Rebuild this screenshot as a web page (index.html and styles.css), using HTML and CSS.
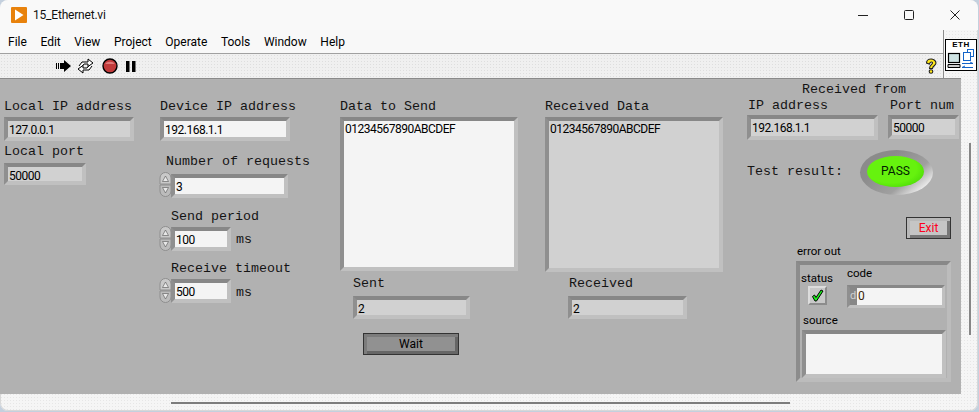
FILE: index.html
```
<!DOCTYPE html>
<html lang="en">
<head>
<meta charset="utf-8">
<title>15_Ethernet.vi</title>
<link rel="stylesheet" href="styles.css">
</head>
<body>
<div class="window">
  <header class="titlebar">
    <svg class="app-icon" width="16" height="16" viewBox="0 0 16 16"><rect width="16" height="16" rx="1" fill="#e8820c"/><path d="M4 2.500 L12.500 8 L4 13.500 Z" fill="#fff"/></svg>
    <span class="title">15_Ethernet.vi</span>
    <div class="window-controls">
      <svg width="12" height="12" viewBox="0 0 12 12"><path d="M1 6.500H11" stroke="#222" fill="none"/></svg>
      <svg width="12" height="12" viewBox="0 0 12 12"><rect x="1.500" y="1.500" width="9" height="9" rx="1" stroke="#222" fill="none"/></svg>
      <svg width="12" height="12" viewBox="0 0 12 12"><path d="M1.500 1.500L10.500 10.500M10.500 1.500L1.500 10.500" stroke="#222" fill="none"/></svg>
    </div>
  </header>
  <div class="top-area">
    <div class="bars">
      <nav class="menubar">
        <span>File</span><span>Edit</span><span>View</span><span>Project</span><span>Operate</span><span>Tools</span><span>Window</span><span>Help</span>
      </nav>
      <div class="toolbar">
        <svg class="tool-run" width="17" height="14" viewBox="0 0 17 14"><path d="M1 4h1v6H1zM3 4h1v6H3zM5 4h4V1l7 6-7 6v-3H5z" fill="#000"/></svg>
        <svg class="tool-loop" width="17" height="16" viewBox="0 0 17 16"><path d="M2 8L5 4H11V1L16 5L11 8.500V6H7L5.500 8M15 8L12 12H6V15L1 11L6 7.500V10H10L11.500 8" fill="#fff" stroke="#000" stroke-width="1"/></svg>
        <svg class="tool-stop" width="16" height="16" viewBox="0 0 16 16"><circle cx="8" cy="8" r="7" fill="#c13a3a" stroke="#000" stroke-width="1.400"/><path d="M3 6a5.500 4 0 0 1 10 0z" fill="#e07a7a"/></svg>
        <svg class="tool-pause" width="10" height="11" viewBox="0 0 10 11"><path d="M0 0h3.500v11H0zM6 0h3.500v11H6z" fill="#000"/></svg>
        <svg class="tool-help" width="12" height="16" viewBox="0 0 12 16"><path d="M1.500 5C1.500 2 4 1 6 1S11 2.500 11 5 7.500 8 7.500 10.500H4.500C4 7.500 7.500 6.500 7.500 5S5 3.500 4.500 6z" fill="#ffe81a" stroke="#222" stroke-width="1.100"/><circle cx="6" cy="13.500" r="1.800" fill="#ffe81a" stroke="#222" stroke-width="1.100"/></svg>
      </div>
    </div>
    <div class="vi-icon">
      <span class="vi-icon-label">ETH</span>
      <svg width="28" height="20" viewBox="0 0 28 20">
        <rect x="1.500" y="4.500" width="11" height="9" fill="#cfe4e4" stroke="#000" stroke-width="1.200"/>
        <path d="M1 15.500H13V18.500H1z" fill="#ccc" stroke="#000"/>
        <rect x="20.500" y=".5" width="6" height="7" fill="none" stroke="#1464c8"/>
        <rect x="16.500" y="3.500" width="7" height="8" fill="#fff" stroke="#1464c8"/>
        <path d="M15 14.500H26M23 13l3 1.500M15 18.500H26M18 17l-3 1.500" stroke="#1464c8" fill="none"/>
      </svg>
    </div>
  </div>

  <main class="panel">
    <span class="label mono l-local-ip">Local IP address</span>
    <div class="field ind f-local-ip">127.0.0.1</div>
    <span class="label mono l-local-port">Local port</span>
    <div class="field ind f-local-port">50000</div>

    <span class="label mono l-device-ip">Device IP address</span>
    <div class="field ctl f-device-ip">192.168.1.1</div>

    <span class="label mono l-requests">Number of requests</span>
    <svg class="spin s-requests" width="13" height="25" viewBox="0 0 13 25"><use href="#spinner"/></svg>
    <div class="field ctl f-requests">3</div>

    <span class="label mono l-period">Send period</span>
    <svg class="spin s-period" width="13" height="25" viewBox="0 0 13 25"><use href="#spinner"/></svg>
    <div class="field ctl f-period">100</div>
    <span class="label mono l-ms1">ms</span>

    <span class="label mono l-timeout">Receive timeout</span>
    <svg class="spin s-timeout" width="13" height="25" viewBox="0 0 13 25"><use href="#spinner"/></svg>
    <div class="field ctl f-timeout">500</div>
    <span class="label mono l-ms2">ms</span>

    <span class="label mono l-data">Data to Send</span>
    <div class="field ctl box f-data">01234567890ABCDEF</div>
    <span class="label mono l-sent">Sent</span>
    <div class="field ind f-sent">2</div>
    <div class="wait-btn">Wait</div>

    <span class="label mono l-rdata">Received Data</span>
    <div class="field ind box f-rdata">01234567890ABCDEF</div>
    <span class="label mono l-received">Received</span>
    <div class="field ind f-received">2</div>

    <span class="label mono l-from">Received from</span>
    <span class="label mono l-ip">IP address</span>
    <div class="field ind f-ip">192.168.1.1</div>
    <span class="label mono l-port">Port num</span>
    <div class="field ind f-port">50000</div>

    <span class="label mono l-test">Test result:</span>
    <div class="led-ring"><div class="led">PASS</div></div>

    <div class="exit-btn">Exit</div>

    <span class="label sans l-error">error out</span>
    <div class="cluster">
      <span class="label sans l-status">status</span>
      <div class="status-btn">
        <svg width="13" height="13" viewBox="0 0 13 13"><path d="M1.500 7.500L3.500 6L5 8.500L10 1L12 2L5.500 12H4z" fill="#1cf01c" stroke="#000"/></svg>
      </div>
      <span class="label sans l-code">code</span>
      <div class="field code-field"><span class="radix">d</span><span class="code-value">0</span></div>
      <span class="label sans l-source">source</span>
      <div class="field ctl box f-source"></div>
    </div>
  </main>

  <div class="vscroll"></div>
  <div class="hscroll"></div>
</div>
<svg class="defs" width="0" height="0">
  <symbol id="spinner" viewBox="0 0 13 25">
    <path d="M1 12V6a5.500 5.500 0 0 1 11 0v6z" fill="#c9c9c9" stroke="#8e8e8e"/>
    <path d="M1 13v6a5.500 5.500 0 0 0 11 0v-6z" fill="#bcbcbc" stroke="#8e8e8e"/>
    <path d="M6.500 4L9.500 9.500H3.500z" fill="#e8e8e8" stroke="#666" stroke-width=".7"/>
    <path d="M6.500 21L9.500 15.500H3.500z" fill="#e8e8e8" stroke="#666" stroke-width=".7"/>
  </symbol>
</svg>
</body>
</html>
```

FILE: styles.css
```
* { box-sizing: border-box; }
html, body { margin: 0; height: 100%; background: #c4d0de; overflow: hidden; }
body { width: 979px; height: 412px; font-family: Roboto, "Open Sans", sans-serif; }
.defs { position: absolute; }

.window {
  position: relative;
  width: 978px;
  height: 411px;
  background-color: #f5f5f5;
  background-image: radial-gradient(#e6e6e6 .7px, transparent .8px);
  background-size: 3px 3px;
  border-radius: 8px;
  overflow: hidden;
  box-shadow: inset 0 0 0 1px #d8d8d8;
}

.titlebar {
  height: 30px;
  display: flex;
  align-items: center;
  padding-left: 11px;
  background: #f9f9f9;
  color: #111;
}
.app-icon { margin-right: 6px; }
.title { font-size: 12px; line-height: 16px; letter-spacing: -.2px; }
.window-controls { margin-left: auto; display: flex; gap: 34px; margin-right: 17px; }

.top-area { display: flex; height: 48px; }
.bars { flex: 1; border-right: 1px solid #8c8c8c; }
.menubar {
  height: 24px;
  display: flex;
  gap: 13.600px;
  padding: 1px 0 0 8px;
  align-items: center;
  font-size: 12px;
  color: #000;
  background: #f8f8f8;
  border-bottom: 1px solid #a0a0a0;
}
.toolbar {
  position: relative;
  height: 24px;
  display: flex;
  align-items: center;
  padding-left: 55px;
  background-color: #f0f0f0;
  background-image: radial-gradient(#dedede .7px, transparent .8px);
  background-size: 3px 3px;
}
.tool-loop { margin-left: 5px; }
.tool-stop { margin-left: 8px; }
.tool-pause { margin-left: 8px; }
.tool-help { margin-left: auto; margin-right: 6px; }

.vi-icon {
  width: 32px;
  height: 32px;
  margin: 9px 1px 0 1px;
  border: 1px solid #000;
  background: #fff;
  display: flex;
  flex-direction: column;
  align-items: center;
}
.vi-icon-label { font: bold 8px/9px "Liberation Sans", sans-serif; color: #000; letter-spacing: .5px; }

.panel {
  position: relative;
  width: 961px;
  height: 316px;
  background: #b1b1b1;
  border-top: 1px solid #8a8a8a;
}

.label { position: absolute; white-space: nowrap; color: #141414; }
.mono { font: 13.330px/16px "Liberation Mono", monospace; }
.sans { font-size: 11.500px; line-height: 14px; color: #000; }

.field {
  position: absolute;
  font-size: 12px;
  line-height: 16px;
  letter-spacing: -.5px;
  color: #000;
  padding: 1px 0 0 1px;
  border: 4px solid;
  border-color: #878787 #c0c0c0 #c0c0c0 #8f8f8f;
  white-space: nowrap;
}
.ctl { background: #f4f4f4; }
.ind { background: #d1d1d1; }
.box { padding-top: 0; }

.l-local-ip { left: 4px; top: 20px; }
.f-local-ip { left: 4px; top: 38px; width: 130px; height: 24px; }
.l-local-port { left: 4px; top: 65px; }
.f-local-port { left: 4px; top: 84px; width: 82px; height: 22px; }
.l-device-ip { left: 160px; top: 20px; }
.f-device-ip { left: 160px; top: 38px; width: 130px; height: 24px; }
.l-requests { left: 166px; top: 75px; }
.f-requests { left: 171px; top: 95px; width: 117px; height: 24px; }
.s-requests { left: 159px; top: 93px; }
.l-period { left: 171px; top: 130px; }
.f-period { left: 171px; top: 148px; width: 60px; height: 24px; }
.s-period { left: 159px; top: 147px; }
.l-ms1 { left: 236px; top: 153px; }
.l-timeout { left: 171px; top: 182px; }
.f-timeout { left: 171px; top: 200px; width: 60px; height: 24px; }
.s-timeout { left: 159px; top: 199px; }
.l-ms2 { left: 236px; top: 206px; }
.l-data { left: 340px; top: 20px; }
.f-data { left: 340px; top: 38px; width: 178px; height: 154px; }
.l-sent { left: 353px; top: 197px; }
.f-sent { left: 353px; top: 217px; width: 117px; height: 23px; }
.l-rdata { left: 545px; top: 20px; }
.f-rdata { left: 545px; top: 38px; width: 178px; height: 155px; }
.l-received { left: 569px; top: 197px; }
.f-received { left: 568px; top: 217px; width: 119px; height: 23px; }
.l-from { left: 802px; top: 3px; }
.l-ip { left: 748px; top: 19px; }
.f-ip { left: 747px; top: 36px; width: 131px; height: 25px; }
.l-port { left: 890px; top: 19px; }
.f-port { left: 888px; top: 36px; width: 71px; height: 24px; }
.l-test { left: 747px; top: 85px; }
.l-error { left: 797px; top: 165px; }

.spin { position: absolute; }

.wait-btn {
  position: absolute;
  left: 363px;
  top: 254px;
  width: 96px;
  height: 22px;
  border: 1px solid #333;
  background: #919191;
  box-shadow: inset 3px 3px 0 #7c7c7c, inset -3px -3px 0 #666;
  font-size: 12px;
  line-height: 20px;
  text-align: center;
  color: #000;
}

.led-ring {
  position: absolute;
  left: 860px;
  top: 71px;
  width: 73px;
  height: 45px;
  border-radius: 50%;
  background: linear-gradient(140deg, #8b8b8b 30%, #a0a0a0 65%, #f2f2f2 88%);
  display: flex;
  align-items: center;
  justify-content: center;
}
.led {
  width: 57px;
  height: 31px;
  margin: 0 2px 2px 0;
  border-radius: 50%;
  background: radial-gradient(ellipse at 42% 40%, #66f20e 55%, #48d806 85%, #2f9e00 100%);
  font-size: 12px;
  line-height: 31px;
  text-align: center;
  color: #021e02;
}

.exit-btn {
  position: absolute;
  left: 906px;
  top: 138px;
  width: 45px;
  height: 22px;
  border: 1px solid #333;
  background: #c5c5c5;
  box-shadow: inset 3px 3px 0 #b8b8b8, inset -3px -3px 0 #777;
  font-size: 12px;
  line-height: 20px;
  text-align: center;
  color: #ff0020;
}

.cluster {
  position: absolute;
  left: 796px;
  top: 182px;
  width: 155px;
  height: 121px;
  border: 4px solid;
  border-color: #888 #bcbcbc #bcbcbc #8c8c8c;
}
.l-status { left: 1px; top: 6px; }
.l-code { left: 47px; top: 1px; }
.status-btn {
  position: absolute;
  left: 8px;
  top: 21px;
  width: 19px;
  height: 19px;
  background: #c8c8c8;
  border: 2px solid;
  border-color: #dcdcdc #8c8c8c #8c8c8c #dcdcdc;
  display: flex;
  align-items: center;
  justify-content: center;
}
.code-field {
  left: 47px;
  top: 20px;
  width: 98px;
  height: 23px;
  padding: 0;
  display: flex;
  border-width: 3px;
  background: #f4f4f4;
}
.radix { width: 7px; background: #878787; color: #d0d0d0; font-size: 11px; flex: none; }
.code-value { padding-left: 1px; color: #3a2408; }
.l-source { left: 3px; top: 48px; }
.f-source { left: 2px; top: 65px; width: 144px; height: 48px; }

.vscroll { position: absolute; left: 969px; top: 143px; width: 2px; height: 192px; background: #868686; }
.hscroll { position: absolute; left: 171px; top: 402px; width: 619px; height: 2px; background: #7c7c7c; }
```
